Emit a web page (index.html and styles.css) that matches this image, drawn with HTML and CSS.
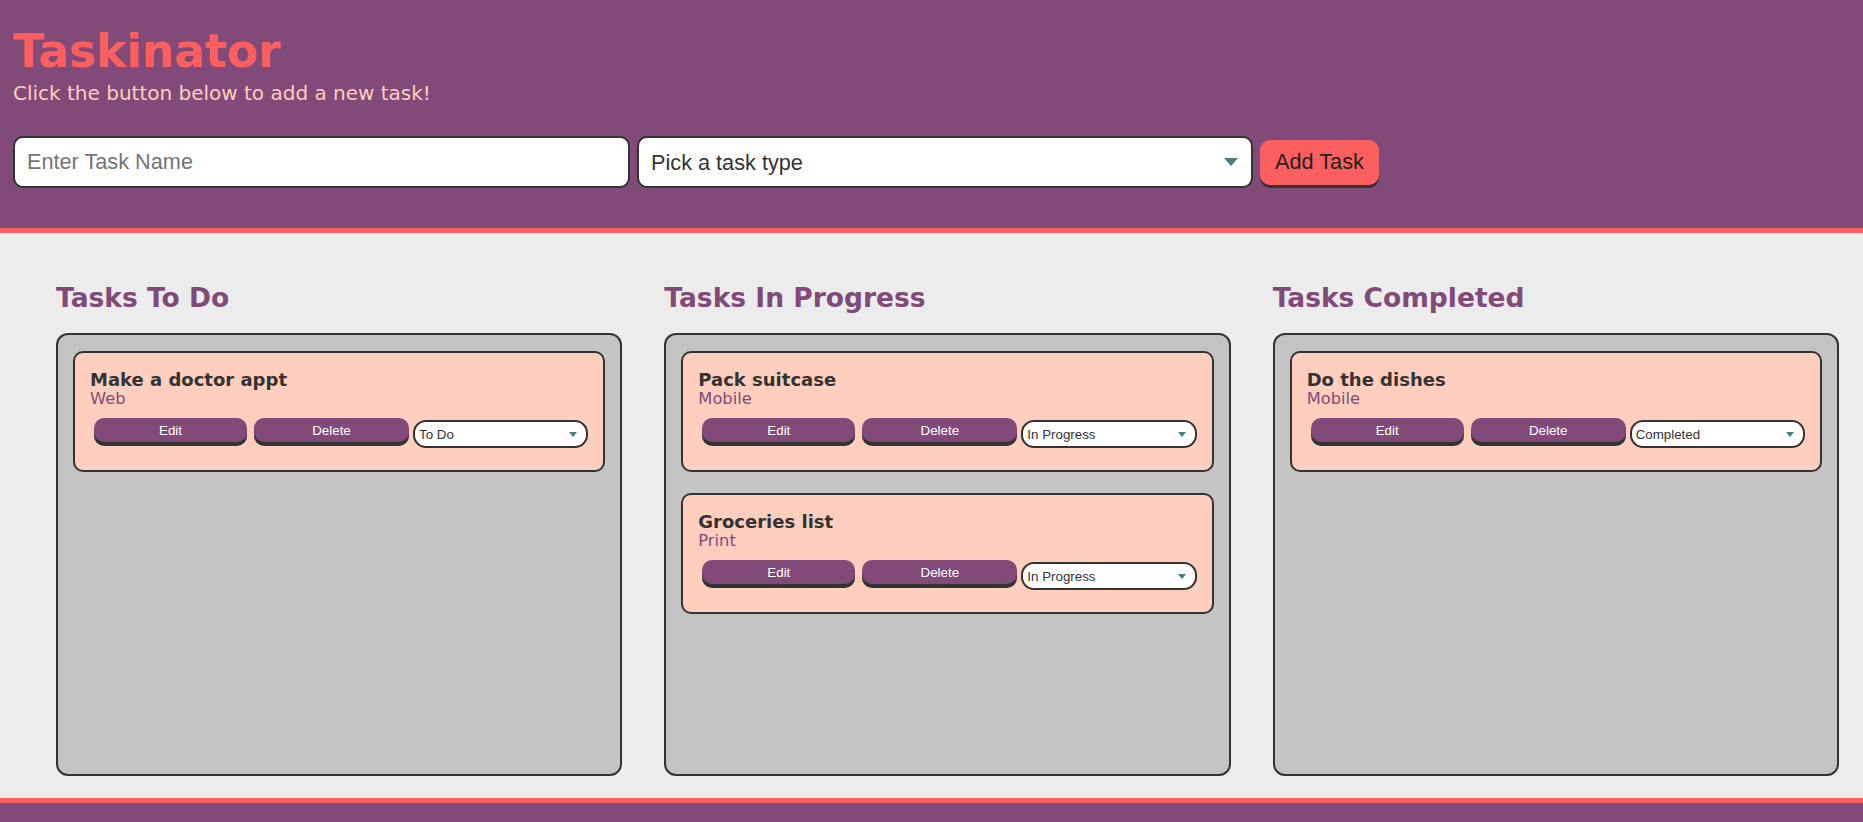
FILE: index.html
```html
<!DOCTYPE html>
<html lang="en">
<head>
<meta charset="utf-8">
<title>Taskinator</title>
<link rel="stylesheet" href="styles.css">
</head>
<body>
<header class="header">
  <h1 class="page-title">Taskinator</h1>
  <p class="subtitle">Click the button below to add a new task!</p>
  <form class="task-form">
    <input class="text-input" type="text" name="task-name" placeholder="Enter Task Name">
    <div class="select-wrap select-wrap--lg">
      <select class="select-input" name="task-type">
        <option value="" selected disabled>Pick a task type</option>
        <option value="Web">Web</option>
        <option value="Mobile">Mobile</option>
        <option value="Print">Print</option>
      </select>
    </div>
    <button class="btn-add" type="button">Add Task</button>
  </form>
</header>

<main class="page-content">
  <section class="task-column">
    <h2 class="list-title">Tasks To Do</h2>
    <ul class="task-list">
      <li class="task-item">
        <h3 class="task-name">Make a doctor appt</h3>
        <span class="task-type">Web</span>
        <div class="task-actions">
          <button class="btn btn-edit" type="button">Edit</button>
          <button class="btn btn-delete" type="button">Delete</button>
          <div class="select-wrap select-wrap--sm">
            <select class="select-status">
              <option selected>To Do</option>
              <option>In Progress</option>
              <option>Completed</option>
            </select>
          </div>
        </div>
      </li>
    </ul>
  </section>

  <section class="task-column">
    <h2 class="list-title">Tasks In Progress</h2>
    <ul class="task-list">
      <li class="task-item">
        <h3 class="task-name">Pack suitcase</h3>
        <span class="task-type">Mobile</span>
        <div class="task-actions">
          <button class="btn btn-edit" type="button">Edit</button>
          <button class="btn btn-delete" type="button">Delete</button>
          <div class="select-wrap select-wrap--sm">
            <select class="select-status">
              <option>To Do</option>
              <option selected>In Progress</option>
              <option>Completed</option>
            </select>
          </div>
        </div>
      </li>
      <li class="task-item">
        <h3 class="task-name">Groceries list</h3>
        <span class="task-type">Print</span>
        <div class="task-actions">
          <button class="btn btn-edit" type="button">Edit</button>
          <button class="btn btn-delete" type="button">Delete</button>
          <div class="select-wrap select-wrap--sm">
            <select class="select-status">
              <option>To Do</option>
              <option selected>In Progress</option>
              <option>Completed</option>
            </select>
          </div>
        </div>
      </li>
    </ul>
  </section>

  <section class="task-column">
    <h2 class="list-title">Tasks Completed</h2>
    <ul class="task-list">
      <li class="task-item">
        <h3 class="task-name">Do the dishes</h3>
        <span class="task-type">Mobile</span>
        <div class="task-actions">
          <button class="btn btn-edit" type="button">Edit</button>
          <button class="btn btn-delete" type="button">Delete</button>
          <div class="select-wrap select-wrap--sm">
            <select class="select-status">
              <option>To Do</option>
              <option>In Progress</option>
              <option selected>Completed</option>
            </select>
          </div>
        </div>
      </li>
    </ul>
  </section>
</main>

<footer class="footer"></footer>
</body>
</html>
```

FILE: styles.css
```css
* {
  box-sizing: border-box;
}

body {
  margin: 0;
  font-family: "DejaVu Sans", Verdana, sans-serif;
  color: #333;
  background-color: #ececec;
}

/* Header */
.header {
  background-color: #824a79;
  border-bottom: 5px solid #fc5f5f;
  padding: 25px 13px 40px;
}

.page-title {
  margin: 0;
  font-size: 45.5px;
  line-height: 53px;
  font-weight: bold;
  color: #fc5f5f;
}

.subtitle {
  margin: 4px 0 0;
  font-size: 20px;
  line-height: 23px;
  color: #fecfbf;
}

.task-form {
  display: flex;
  align-items: center;
  margin-top: 31px;
}

.text-input,
.select-input {
  height: 52px;
  border: 2px solid #333;
  border-radius: 10px;
  background-color: #fff;
  font-family: "Liberation Sans", Arial, sans-serif;
  font-size: 21.7px;
  color: #333;
  padding: 0 12px;
  outline: none;
}

.text-input {
  flex: 0 0 617px;
}

.text-input::placeholder {
  color: #757575;
}

.select-wrap {
  position: relative;
}

.select-wrap--lg {
  flex: 0 0 616px;
  margin-left: 7px;
}

.select-input {
  width: 100%;
  -webkit-appearance: none;
  appearance: none;
}

.select-wrap--lg::after {
  content: "";
  position: absolute;
  right: 15px;
  top: 22px;
  border-left: 7px solid transparent;
  border-right: 7px solid transparent;
  border-top: 8px solid #4b7d80;
  pointer-events: none;
}

.btn-add {
  margin-left: 7px;
  height: 45px;
  padding: 0 15px;
  border: none;
  border-radius: 10px;
  background-color: #fc5f5f;
  color: #222;
  font-family: "Liberation Sans", Arial, sans-serif;
  font-size: 21.7px;
  box-shadow: 0 3px 0 #333;
}

/* Main */
.page-content {
  display: grid;
  grid-template-columns: repeat(3, 1fr);
  column-gap: 42px;
  padding: 50px 24px 22px 56px;
}

.list-title {
  margin: 0 0 21px;
  font-size: 26.5px;
  line-height: 29px;
  font-weight: bold;
  color: #824a79;
}

.task-list {
  list-style: none;
  margin: 0;
  height: 443px;
  padding: 16px 15px;
  background-color: #c4c4c4;
  border: 2px solid #333;
  border-radius: 12px;
  display: flex;
  flex-direction: column;
  gap: 21px;
}

.task-item {
  background-color: #fecfbf;
  border: 2px solid #333;
  border-radius: 10px;
  padding: 16px 15px 22px;
}

.task-name {
  margin: 0;
  font-size: 18px;
  line-height: 21px;
  font-weight: bold;
  color: #333;
}

.task-type {
  display: block;
  font-size: 16.3px;
  line-height: 18px;
  color: #824a79;
}

.task-actions {
  display: flex;
  align-items: flex-start;
  margin-top: 10px;
}

.btn {
  height: 24px;
  padding: 0;
  border: none;
  border-radius: 10px;
  background-color: #824a79;
  color: #fff;
  font-family: "Liberation Sans", Arial, sans-serif;
  font-size: 13.33px;
  box-shadow: 0 4px 0 #333;
}

.btn-edit {
  flex: 0 0 153px;
  margin-left: 4px;
}

.btn-delete {
  flex: 0 0 155px;
  margin-left: 7px;
}

.select-wrap--sm {
  flex: 1;
  margin-left: 4px;
  margin-top: 2px;
}

.select-status {
  width: 100%;
  height: 28px;
  -webkit-appearance: none;
  appearance: none;
  border: 2px solid #333;
  border-radius: 13px;
  background-color: #fff;
  padding: 0 4px;
  font-family: "Liberation Sans", Arial, sans-serif;
  font-size: 13.33px;
  color: #333;
  outline: none;
}

.select-wrap--sm::after {
  content: "";
  position: absolute;
  right: 11px;
  top: 12px;
  border-left: 4.5px solid transparent;
  border-right: 4.5px solid transparent;
  border-top: 5.5px solid #4b7d80;
  pointer-events: none;
}

/* Footer */
.footer {
  height: 40px;
  background-color: #824a79;
  border-top: 5px solid #fc5f5f;
}
```
